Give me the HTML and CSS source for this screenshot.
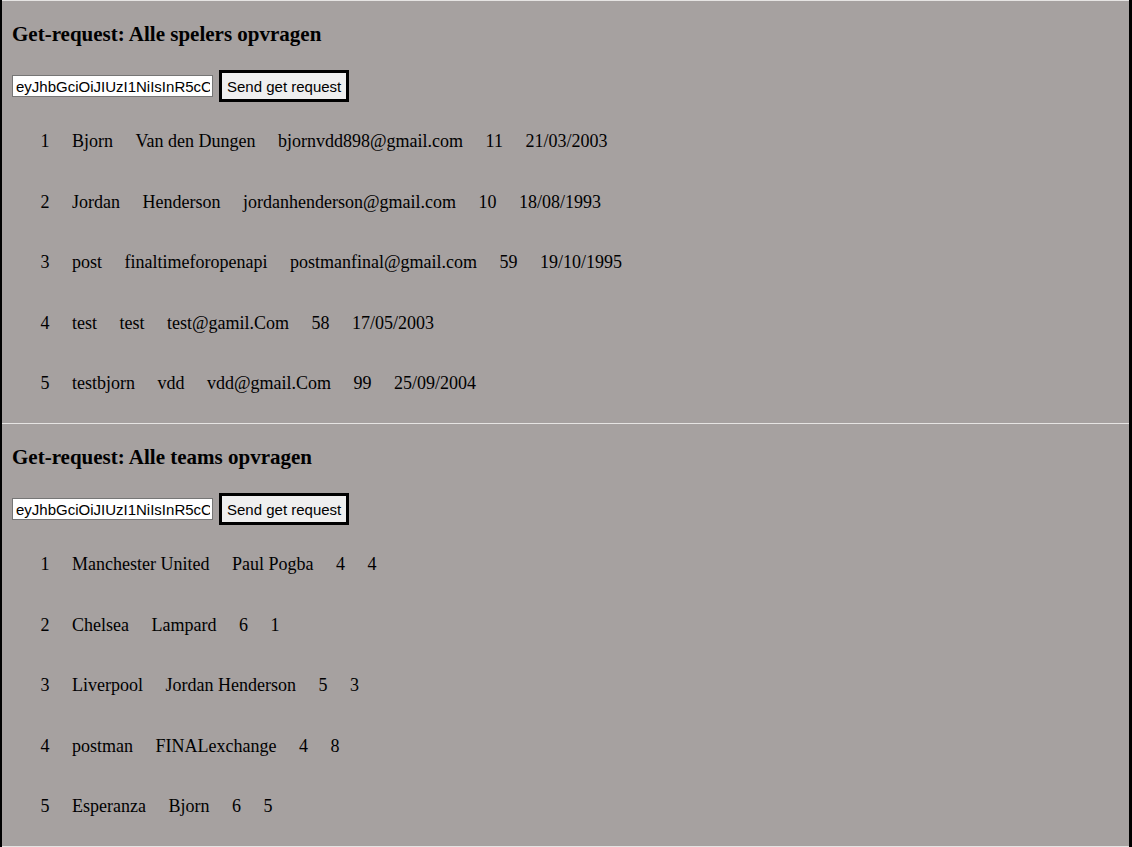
FILE: index.html
```html
<!DOCTYPE html>
<html lang="nl">
<head>
<meta charset="utf-8">
<title>Get-requests</title>
<link rel="stylesheet" href="styles.css">
</head>
<body>
<main class="page">
  <section class="panel">
    <h3 class="panel-title">Get-request: Alle spelers opvragen</h3>
    <div class="controls">
      <input class="token" type="text" value="eyJhbGciOiJIUzI1NiIsInR5cCI6IkpXVCJ9.eyJzdWIiOiIxMjM0NTY3ODkwIn0">
      <button class="send" type="button">Send get request</button>
    </div>
    <ul class="rows">
      <li class="row"><span>1</span><span>Bjorn</span><span>Van den Dungen</span><span>bjornvdd898@gmail.com</span><span>11</span><span>21/03/2003</span></li>
      <li class="row"><span>2</span><span>Jordan</span><span>Henderson</span><span>jordanhenderson@gmail.com</span><span>10</span><span>18/08/1993</span></li>
      <li class="row"><span>3</span><span>post</span><span>finaltimeforopenapi</span><span>postmanfinal@gmail.com</span><span>59</span><span>19/10/1995</span></li>
      <li class="row"><span>4</span><span>test</span><span>test</span><span>test@gamil.Com</span><span>58</span><span>17/05/2003</span></li>
      <li class="row"><span>5</span><span>testbjorn</span><span>vdd</span><span>vdd@gmail.Com</span><span>99</span><span>25/09/2004</span></li>
    </ul>
  </section>
  <section class="panel panel-last">
    <h3 class="panel-title">Get-request: Alle teams opvragen</h3>
    <div class="controls">
      <input class="token" type="text" value="eyJhbGciOiJIUzI1NiIsInR5cCI6IkpXVCJ9.eyJzdWIiOiIxMjM0NTY3ODkwIn0">
      <button class="send" type="button">Send get request</button>
    </div>
    <ul class="rows">
      <li class="row"><span>1</span><span>Manchester United</span><span>Paul Pogba</span><span>4</span><span>4</span></li>
      <li class="row"><span>2</span><span>Chelsea</span><span>Lampard</span><span>6</span><span>1</span></li>
      <li class="row"><span>3</span><span>Liverpool</span><span>Jordan Henderson</span><span>5</span><span>3</span></li>
      <li class="row"><span>4</span><span>postman</span><span>FINALexchange</span><span>4</span><span>8</span></li>
      <li class="row"><span>5</span><span>Esperanza</span><span>Bjorn</span><span>6</span><span>5</span></li>
    </ul>
  </section>
</main>
</body>
</html>
```

FILE: styles.css
```css
html, body {
  margin: 0;
  padding: 0;
}

body {
  background: #000;
  font-family: "Liberation Serif", "Times New Roman", serif;
  font-size: 18px;
  color: #000;
  height: 847px;
  overflow: hidden;
}

.page {
  margin: 0 3px 0 2px;
  background: #a6a1a0;
  height: 847px;
}

.panel {
  box-sizing: border-box;
  height: 423px;
  border-top: 1px solid #e6e4e3;
  padding: 21px 0 0 10px;
}

.panel-last {
  height: 424px;
  border-bottom: 1px solid #e6e4e3;
}

.panel-title {
  margin: 0;
  font-size: 21px;
  line-height: 24px;
  font-weight: bold;
}

.controls {
  display: flex;
  align-items: center;
  gap: 6px;
  margin-top: 24px;
}

.token {
  box-sizing: border-box;
  width: 201px;
  height: 22px;
  margin: 0;
  padding: 1px 2px 1px 3px;
  border: 1px solid #767676;
  border-radius: 0;
  background: #fff;
  font-family: "Liberation Sans", Arial, sans-serif;
  font-size: 15px;
  color: #000;
}

.send {
  box-sizing: border-box;
  height: 32px;
  margin: 0;
  padding: 0 5px;
  border: 3px solid #000;
  border-radius: 0;
  background: #efefef;
  font-family: "Liberation Sans", Arial, sans-serif;
  font-size: 15px;
  color: #000;
}

.rows {
  list-style: none;
  margin: 8.75px 0 0 0;
  padding: 0 0 0 28.5px;
}

.row {
  display: flex;
  align-items: center;
  gap: 22.5px;
  height: 60.5px;
  line-height: 20px;
}
```
